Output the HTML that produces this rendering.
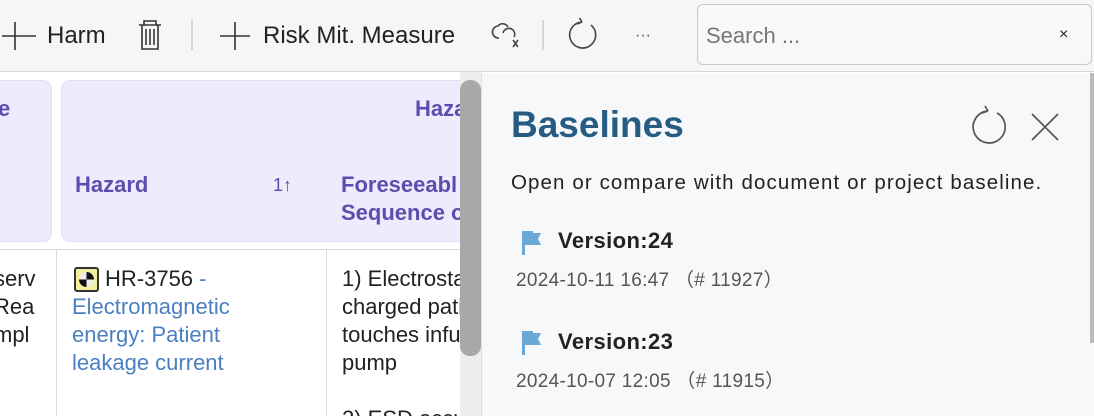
<!DOCTYPE html>
<html><head><meta charset="utf-8"><style>
*{margin:0;padding:0;box-sizing:border-box}
html,body{width:1094px;height:416px;overflow:hidden}
body{position:relative;background:#fff;font-family:"Liberation Sans",sans-serif;color:#222}
.a{position:absolute;white-space:nowrap}
.tb{position:absolute;left:0;top:0;width:1094px;height:72px;background:#f6f6f6;border-bottom:1px solid #d6d6d6}
.card{position:absolute;background:#eeebfd;border-radius:9px;border:1px solid #e2def5}
.hd{color:#5a4fae;font-weight:bold;font-size:22px}
.cell{font-size:22px;line-height:28px}
</style></head><body>
<div class="tb"></div>
<svg class="a" style="left:0;top:18px" width="700" height="36" viewBox="0 18 700 36">
<g stroke="#333" stroke-width="1.6" fill="none">
<path d="M15 22V50M2 36H36"/>
<path d="M235 22V50M220 36H250"/>
<path d="M144 25V21H156V25M139 25H161M142 25V49H158V25M146 29V45M150 29V45M154 29V45"/>
</g>
<line x1="192" y1="20" x2="192" y2="50" stroke="#ccc" stroke-width="1.5"/>
<line x1="543" y1="20" x2="543" y2="50" stroke="#ccc" stroke-width="1.5"/>
<g stroke="#444" stroke-width="1.6" fill="none">
<path d="M499 38a6 6 0 0 1-1-12a6 6 0 0 1 10 1M503 33a6 6 0 0 1 10-3a6 6 0 0 1 1 7"/>
<path d="M513 40l5 7M518 40l-5 7"/>
<path d="M582 22a13 13 0 1 0 9 3M582 22l-3-5M582 22l-5 2"/>
</g>
<text x="635" y="40" font-size="16" fill="#555" font-family="Liberation Sans">···</text>
</svg>
<div class="a" style="left:47px;top:22px;font-size:24px;color:#222">Harm</div>
<div class="a" style="left:263px;top:22px;font-size:24px;color:#222">Risk Mit. Measure</div>
<div class="a" style="left:697px;top:4px;width:395px;height:61px;border:1px solid #c9c9c9;border-radius:6px;background:#f8f8f8"></div>
<div class="a" style="left:706px;top:23px;font-size:22px;color:#777">Search ...</div>
<div class="a" style="left:1059px;top:26px;font-size:16px;color:#222">×</div>

<div class="card" style="left:-10px;top:80px;width:62px;height:162px"></div>
<div class="a hd" style="left:-2px;top:96px">e</div>
<div class="card" style="left:61px;top:80px;width:420px;height:162px"></div>
<div class="a hd" style="left:415px;top:96px">Haza</div>
<div class="a hd" style="left:75px;top:172px">Hazard</div>
<div class="a" style="left:273px;top:175px;font-size:18px;color:#5a4fae">1↑</div>
<div class="a hd" style="left:341px;top:171px;line-height:28px">Foreseeabl<br>Sequence o</div>
<div class="a" style="left:0;top:249px;width:460px;height:1px;background:#ddd"></div>
<div class="a" style="left:56px;top:250px;width:1px;height:166px;background:#ddd"></div>
<div class="a" style="left:326px;top:250px;width:1px;height:166px;background:#ddd"></div>
<div class="a cell" style="left:-6px;top:265px;width:44px;overflow:hidden;direction:rtl;text-align:left">serv<br>Rea<br>mpl</div>
<div class="a" style="left:74px;top:267px;width:25px;height:25px;border:2px solid #333;border-radius:3px;background:#f2f0a0"><div style="position:absolute;left:3px;top:3px;width:15px;height:15px;border-radius:50%;background:conic-gradient(#111 0 25%,#eee 0 50%,#111 0 75%,#eee 0)"></div></div>
<div class="a cell" style="left:72px;top:265px"><span style="margin-left:33px">HR-3756</span> <span style="color:#4a7fc1">-</span><br><span style="color:#4a7fc1">Electromagnetic<br>energy: Patient<br>leakage current</span></div>
<div class="a cell" style="left:342px;top:265px;width:118px;overflow:hidden;height:151px">1) Electrostatic<br>charged patient<br>touches infusion<br>pump<br><br>2) ESD occurs</div>
<div class="a" style="left:460px;top:72px;width:21px;height:344px;background:#eee"></div>
<div class="a" style="left:460px;top:80px;width:21px;height:276px;background:#a8a8a8;border-radius:10px"></div>

<div class="a" style="left:481px;top:73px;width:613px;height:343px;background:#f7f8fa;border-left:1px solid #ddd"></div>
<div class="a" style="left:1090px;top:73px;width:4px;height:270px;background:#bbb"></div>
<div class="a" style="left:511px;top:104px;font-size:37px;font-weight:bold;color:#265c82">Baselines</div>
<svg class="a" style="left:970px;top:105px" width="95" height="45">
<g stroke="#555" stroke-width="1.7" fill="none">
<path d="M18 6a16 16 0 1 0 9 2M18 6l-3-5M18 6l-6 2"/>
<path d="M62 9l26 26M88 9L62 35"/>
</g></svg>
<div class="a" style="left:511px;top:171px;font-size:20.5px;letter-spacing:1.1px;color:#222">Open or compare with document or project baseline.</div>
<svg class="a" style="left:516px;top:230px" width="30" height="130">
<path d="M6 1h11v2h8l-3 6 3 6H9v10H6z" fill="#6aa8d8"/>
<path d="M6 101h11v2h8l-3 6 3 6H9v10H6z" fill="#6aa8d8"/>
</svg>
<div class="a" style="left:558px;top:228px;font-size:22px;letter-spacing:0.4px;font-weight:bold;color:#222">Version:24</div>
<div class="a" style="left:516px;top:265px;font-size:19px;letter-spacing:0.3px;color:#555">2024-10-11 16:47 （# 11927）</div>
<div class="a" style="left:558px;top:329px;font-size:22px;letter-spacing:0.4px;font-weight:bold;color:#222">Version:23</div>
<div class="a" style="left:516px;top:366px;font-size:19px;letter-spacing:0.3px;color:#555">2024-10-07 12:05 （# 11915）</div>
</body></html>
